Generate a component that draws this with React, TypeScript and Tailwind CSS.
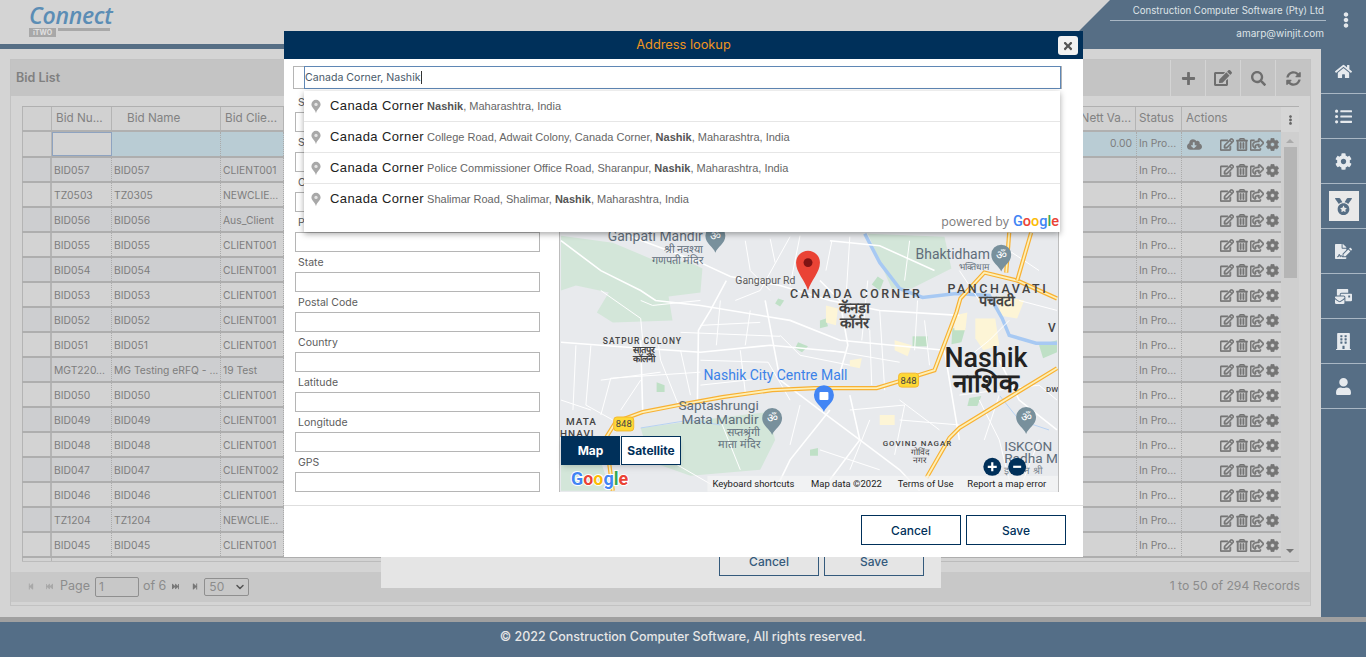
import React from 'react';
import {
  FaBuilding,
  FaCloudDownloadAlt,
  FaCog,
  FaEdit,
  FaEllipsisV,
  FaFileSignature,
  FaFastBackward,
  FaFastForward,
  FaHome,
  FaListUl,
  FaMailBulk,
  FaMedal,
  FaPlus,
  FaRegEdit,
  FaRegShareSquare,
  FaRegTrashAlt,
  FaSearch,
  FaStepBackward,
  FaStepForward,
  FaSyncAlt,
  FaTimes,
  FaUser,
} from 'react-icons/fa';
import { ChevronDown } from 'lucide-react';

const rows = [
  ['BID057', 'BID057', 'CLIENT001'],
  ['TZ0503', 'TZ0305', 'NEWCLIE...'],
  ['BID056', 'BID056', 'Aus_Client'],
  ['BID055', 'BID055', 'CLIENT001'],
  ['BID054', 'BID054', 'CLIENT001'],
  ['BID053', 'BID053', 'CLIENT001'],
  ['BID052', 'BID052', 'CLIENT001'],
  ['BID051', 'BID051', 'CLIENT001'],
  ['MGT220...', 'MG Testing eRFQ - ...', '19 Test'],
  ['BID050', 'BID050', 'CLIENT001'],
  ['BID049', 'BID049', 'CLIENT001'],
  ['BID048', 'BID048', 'CLIENT001'],
  ['BID047', 'BID047', 'CLIENT002'],
  ['BID046', 'BID046', 'CLIENT001'],
  ['TZ1204', 'TZ1204', 'NEWCLIE...'],
  ['BID045', 'BID045', 'CLIENT001'],
];

const sideItems = [FaHome, FaListUl, FaCog, FaMedal, FaFileSignature, FaMailBulk, FaBuilding, FaUser];

const fields = ['Street No', 'Street', 'City', 'Province', 'State', 'Postal Code', 'Country', 'Latitude', 'Longitude', 'GPS'];

const suggestions = [
  { rest: [['Nashik', true], [', Maharashtra, India', false]] },
  { rest: [['College Road, Adwait Colony, Canada Corner, ', false], ['Nashik', true], [', Maharashtra, India', false]] },
  { rest: [['Police Commissioner Office Road, Sharanpur, ', false], ['Nashik', true], [', Maharashtra, India', false]] },
  { rest: [['Shalimar Road, Shalimar, ', false], ['Nashik', true], [', Maharashtra, India', false]] },
] as { rest: [string, boolean][] }[];

// map geometry is in page coordinates, the viewBox starts at the map's corner
const greens = [
  '560,235 612,242 650,258 690,262 702,268 700,292 668,296 672,320 612,322 596,312 608,292 575,285 560,290',
  '640,428 700,420 768,412 775,440 760,470 690,476 650,462',
  '868,233 945,236 952,268 912,288 892,288',
  '560,450 600,462 610,491 560,491',
];
const greenSmall = [
  '656,382 664,385 664,392 656,392',
  '798,342 808,346 802,352 795,348',
  '778,298 784,300 780,306 775,303',
  '913,336 928,336 928,346 913,346',
  '953,328 966,328 962,342 952,344',
  '970,398 982,396 978,406 968,406',
  '820,320 826,318 828,326 820,328',
  '878,276 884,280 880,290 872,284',
  '1040,345 1058,340 1058,352 1044,358',
  '810,450 818,448 818,456 810,456',
];
const yellows = [
  '976,318 996,318 1000,345 984,350 976,338',
  '955,315 968,312 966,330 955,330',
  '895,340 912,345 908,356 895,350',
  '850,360 862,358 860,368 850,366',
  '1000,295 1025,300 1018,318 1000,315',
  '826,305 838,308 836,325 826,322',
  '880,415 895,415 895,425 880,425',
];
const roads = [
  '560,240 600,270 640,290 655,300 700,305 790,320 840,340 945,350',
  '620,232 700,262 730,276 780,285 830,300 880,310 960,315',
  '560,342 640,348 700,352 770,345 845,352',
  '726,280 710,310 698,330 697,400',
  '640,340 642,410',
  '765,300 780,380 800,395 820,410 860,440',
  '820,280 840,300 848,345 838,380',
  '945,350 960,440',
  '860,440 900,470 920,491',
  '775,491 790,460 830,410',
  '1000,360 1020,400 1058,430',
  '830,240 880,245 935,270',
  '850,395 860,440 830,480',
];
const thinRoads = [
  '678,405 660,360 658,345',
  '590,345 585,405 612,420',
  '700,360 768,362 790,400',
  '900,420 960,425',
  '1010,320 990,340 975,352',
  '1040,440 1020,491',
  '868,280 862,340',
  '918,300 915,350',
  '880,310 885,390',
  '800,235 790,285',
  '745,240 750,270 770,290',
  '640,300 652,305 700,300',
  '600,415 610,378 700,372',
  '668,460 720,490',
  '680,332 780,336',
  '700,325 760,322',
  '830,350 900,362',
  '870,420 850,470',
  '900,400 940,430',
  '980,400 1000,440 1010,480',
  '1020,300 1058,310',
  '720,420 740,470',
  '600,380 660,372',
  '575,345 572,410',
  '640,380 620,410',
  '910,240 905,280',
  '960,270 980,300',
  '790,236 760,290 735,300',
  '770,238 775,262',
  '832,240 826,270',
  '850,236 846,300',
  '680,350 690,395',
  '740,350 745,392',
  '700,385 765,378',
  '720,300 716,345',
  '750,310 745,345',
  '780,335 800,355 850,365',
  '855,310 870,330 872,385',
  '800,405 790,445',
  '850,410 905,405',
  '905,405 895,455',
  '820,450 880,470',
  '960,395 1040,385',
  '1000,395 985,440',
  '1040,385 1058,400',
  '925,320 930,365',
  '560,400 590,410',
  '1010,250 1040,270',
  '600,290 640,318 642,340',
];
const highways = [
  '612,491 605,438 615,422 642,412 678,405 722,397 772,390 815,388 877,388 903,380 935,370 957,312 961,298 985,272 1018,280 1058,298',
  '1010,232 1007,272',
  '1032,232 1018,280',
  '927,478 950,438 960,428 1058,368',
];
const river = '865,233 880,262 900,288 923,297 957,293 990,295 1003,318 1010,335 1037,343 1058,343';

const mapText = 'font-["Roboto",sans-serif]';

const MapPin: React.FC<{ x: number; y: number; color?: string; bag?: boolean }> = ({ x, y, color = '#78909c', bag }) => (
  <g transform={`translate(${x} ${y})`}>
    <path d="M0 0 C-2-6-10-9-10-17 A10 10 0 1 1 10-17 C10-9 2-6 0 0Z" fill={color} />
    {bag ? (
      <rect x="-4.5" y="-20" width="9" height="8" rx="1" fill="#fff" />
    ) : (
      <text x="0" y="-12.5" textAnchor="middle" fontSize="12" fill="#fff">ॐ</text>
    )}
  </g>
);

const MapShield: React.FC<{ x: number; y: number }> = ({ x, y }) => (
  <g>
    <rect x={x - 10} y={y - 7} width="20" height="14" rx="3" fill="#fdd835" stroke="#f5b72e" />
    <text x={x} y={y + 3.5} textAnchor="middle" fontSize="9.5" fill="#444">848</text>
  </g>
);

const NashikMap: React.FC = () => (
  <svg viewBox="559 92 500 400" className={`block w-[498px] h-[399px] bg-[#e8eaed] ${mapText}`}>
    {greens.map((p, i) => <polygon key={i} points={p} fill="#d3e6d9" />)}
    {greenSmall.map((p, i) => <polygon key={i} points={p} fill="#bfe0c6" />)}
    {yellows.map((p, i) => <polygon key={i} points={p} fill="#fdf5d6" />)}
    <polyline points={river} fill="none" stroke="#a7c9f3" strokeWidth="3.5" />
    <polyline points="1000,395 1020,420 1050,430" fill="none" stroke="#b7d2f3" strokeWidth="1" />
    <polyline points="640,428 690,420 720,425" fill="none" stroke="#b7d2f3" strokeWidth="1" />
    {thinRoads.map((p, i) => <polyline key={i} points={p} fill="none" stroke="#fff" strokeWidth="1" />)}
    {roads.map((p, i) => <polyline key={i} points={p} fill="none" stroke="#fff" strokeWidth="1.6" />)}
    {highways.map((p, i) => (
      <g key={i}>
        <polyline points={p} fill="none" stroke="#f8b133" strokeWidth="4.2" />
        <polyline points={p} fill="none" stroke="#fdf0b8" strokeWidth="1.8" />
      </g>
    ))}

    <MapShield x={623} y={424} />
    <MapShield x={909} y={380} />

    <g fill="#5f6d7a" fontSize="13.7">
      <text x="607" y="240" fontSize="14">Ganpati Mandir</text>
      <text x="703" y="252" textAnchor="end" fontSize="11">श्री नवश्या</text>
      <text x="703" y="263" textAnchor="end" fontSize="11">गणपती मंदिर</text>
      <text x="916" y="258" fontSize="14">Bhaktidham</text>
      <text x="990" y="269" textAnchor="end" fontSize="9">भक्तिधाम</text>
      <text x="678" y="410">Saptashrungi</text>
      <text x="681" y="424">Mata Mandir</text>
      <text x="760" y="436" textAnchor="end" fontSize="11">सप्तश्रृंगी</text>
      <text x="760" y="448" textAnchor="end" fontSize="11">माता मंदिर</text>
      <text x="1005" y="451">ISKCON</text>
      <text x="1005" y="463">Radha M</text>
      <text x="1005" y="474" fontSize="10" opacity="0.8">इस्कॉन श्री</text>
    </g>
    <text x="735" y="283" fontSize="10.5" fill="#5a5a5a">Gangapur Rd</text>
    <g fill="#444" fontWeight="500">
      <text x="790" y="298" fontSize="12.5" letterSpacing="2.4">CANADA CORNER</text>
      <text x="855" y="313" fontSize="15" fontWeight="700" textAnchor="middle">कॅनडा</text>
      <text x="855" y="328" fontSize="15" fontWeight="700" textAnchor="middle">कॉर्नर</text>
      <text x="948" y="293" fontSize="12.5" letterSpacing="2.6">PANCHAVATI</text>
      <text x="998" y="306" fontSize="14.5" fontWeight="700" textAnchor="middle">पंचवटी</text>
      <text x="1049" y="332" fontSize="12">V</text>
      <text x="602" y="344" fontSize="8.5" letterSpacing="1">SATPUR COLONY</text>
      <text x="643" y="353" fontSize="9.5" fontWeight="700" textAnchor="middle">सातपुर</text>
      <text x="643" y="362" fontSize="9.5" fontWeight="700" textAnchor="middle">कॉलनी</text>
      <text x="565" y="425" fontSize="10" letterSpacing="1">MATA</text>
      <text x="559" y="437" fontSize="10" letterSpacing="1">HNAVI</text>
      <text x="883" y="446" fontSize="8" letterSpacing="1">GOVIND NAGAR</text>
      <text x="920" y="455" fontSize="8.5" textAnchor="middle">गोविंद</text>
      <text x="920" y="463" fontSize="8.5" textAnchor="middle">नगर</text>
      <text x="1047" y="392" fontSize="8">DW</text>
    </g>
    <text x="703" y="380" fontSize="14" fill="#3b82e8">Nashik City Centre Mall</text>
    <text x="945" y="367" fontSize="27" fontWeight="500" fill="#222">Nashik</text>
    <text x="987" y="392" fontSize="26" fontWeight="700" fill="#222" textAnchor="middle">नाशिक</text>

    <MapPin x={715} y={252} />
    <MapPin x={772} y={435} />
    <MapPin x={1002} y={271} />
    <MapPin x={1027} y={434} />
    <MapPin x={824} y={412} color="#4285f4" bag />

    <path d="M808 290 C805 280 796 272 796 262 A12 12 0 1 1 820 262 C820 272 811 280 808 290Z" fill="#ea4335" />
    <circle cx="808" cy="262" r="4.5" fill="#7f1313" />

    <rect x="707" y="476" width="352" height="16" fill="#f5f5f5" opacity="0.7" />
    <g fontSize="9.5" fill="#222">
      <text x="712" y="487">Keyboard shortcuts</text>
      <text x="811" y="487">Map data ©2022</text>
      <text x="898" y="487">Terms of Use</text>
      <text x="968" y="487">Report a map error</text>
    </g>
    <text x="570" y="485" fontSize="18" fontWeight="700" stroke="#fff" strokeWidth="2" style={{ paintOrder: 'stroke' }}>
      <tspan fill="#4285f4">G</tspan><tspan fill="#ea4335">o</tspan><tspan fill="#fbbc05">o</tspan><tspan fill="#4285f4">g</tspan><tspan fill="#34a853">l</tspan><tspan fill="#ea4335">e</tspan>
    </text>

    <circle cx="993" cy="467" r="9" fill="#00305a" />
    <path d="M988.5 467h9M993 462.5v9" stroke="#fff" strokeWidth="2.2" />
    <circle cx="1018" cy="467" r="9" fill="#00305a" />
    <path d="M1014 467h8" stroke="#fff" strokeWidth="2.2" />
  </svg>
);

const GrayPin: React.FC = () => (
  <svg viewBox="0 0 12 16" className="w-[10px] h-[15px] shrink-0">
    <path d="M6 16 C5 11 0.5 9 0.5 5.5 A5.5 5.5 0 1 1 11.5 5.5 C11.5 9 7 11 6 16Z" fill="#a8a8a8" />
    <circle cx="6" cy="5.5" r="2" fill="#e4e4e4" />
  </svg>
);

const AddressModal: React.FC = () => (
  <div className="absolute left-[284px] top-[31px] w-[799px] h-[526px] bg-white flex flex-col font-['Inter',sans-serif]">
    <div className="h-[28px] shrink-0 bg-[#00305a] flex items-center justify-center relative">
      <span className="text-[12.8px] text-[#f0951e]">Address lookup</span>
      <button className="absolute right-[5px] top-[5px] w-[20px] h-[19px] bg-[#f2f2f2] rounded-[3px] flex items-center justify-center text-[#555]">
        <FaTimes className="w-[12px] h-[12px]" />
      </button>
    </div>

    <div className="h-[33px] shrink-0 pl-[9px] pr-[21px] pt-[7px]">
      <div className="h-[23px] border border-[#b5b5b5] pl-[10px] flex">
        <div className="flex-1 -mt-[1px] h-[23px] border border-[#5f87b5] flex items-center text-[10.6px] text-[#4a5a6a]">
          Canada Corner, Nashik<span className="w-px h-[13px] bg-[#333]" />
        </div>
      </div>
    </div>

    <div className="flex pl-[11px] gap-[19px]">
      <div className="w-[245px]">
        {fields.map((f) => (
          <div key={f} className="h-[40px]">
            <div className="h-[20px] pl-[3px] pt-[1px] flex items-center text-[10.5px] text-[#5c5c5c]">{f}</div>
            <div className="h-[20px] border border-[#b5b5b5] bg-white" />
          </div>
        ))}
      </div>
      <div className="relative w-[500px] h-[400px] border border-[#bdbdbd]">
        <NashikMap />
        <div className="absolute left-[1px] top-[343px] flex gap-px shadow-md text-[12px] font-bold">
          <div className="w-[59px] h-[29px] bg-[#00305a] text-white flex items-center justify-center">Map</div>
          <div className="w-[60px] h-[29px] bg-white border border-[#00305a] text-[#00305a] flex items-center justify-center">Satellite</div>
        </div>
      </div>
    </div>

    <div className="mt-[13px] border-t border-[#dedede] pt-[9px] pr-[17px] flex justify-end gap-[5px]">
      <button className="w-[100px] h-[30px] pt-[2px] border border-[#00305a] text-[12px] font-medium text-[#00305a]">Cancel</button>
      <button className="w-[100px] h-[30px] pt-[2px] border border-[#00305a] text-[12px] font-medium text-[#00305a]">Save</button>
    </div>

    {/* places autocomplete, sits over the form and the map */}
    <div className="absolute left-[20px] top-[60px] w-[756px] h-[141px] bg-white shadow-[0_2px_6px_rgba(0,0,0,0.35)] font-['Liberation_Sans',sans-serif]">
      {suggestions.map((s, i) => (
        <div key={i} className={`h-[31px] flex items-center pl-[7px] whitespace-nowrap border-b ${i < 3 ? 'border-[#e6e6e6]' : 'border-transparent'}`}>
          <GrayPin />
          <span className="ml-[9px] text-[13px] tracking-[0.4px] text-[#222]">Canada Corner</span>
          <span className="ml-[3px] text-[11px] text-[#666]">
            {s.rest.map(([t, bold], j) => (
              <span key={j} className={bold ? 'font-bold text-[#555]' : ''}>{t}</span>
            ))}
          </span>
        </div>
      ))}
      <div className="absolute right-[1px] -bottom-[1px] flex items-baseline text-[12.3px] text-[#7b7b7b] font-['Open_Sans',sans-serif]">
        <span>powered by</span>
        <span className="ml-[4px] text-[14.5px] font-['Roboto',sans-serif] font-medium">
          <span className="text-[#4285f4]">G</span>
          <span className="text-[#ea4335]">o</span>
          <span className="text-[#fbbc05]">o</span>
          <span className="text-[#4285f4]">g</span>
          <span className="text-[#34a853]">l</span>
          <span className="text-[#ea4335]">e</span>
        </span>
      </div>
    </div>
  </div>
);

const RowActions: React.FC = () => (
  <div className="ml-auto mr-[2px] flex items-center gap-[2px] text-[#757575] [&_svg]:[stroke-width:24]">
    <FaRegEdit className="w-[14px] h-[13px]" />
    <FaRegTrashAlt className="w-[12px] h-[13px]" />
    <FaRegShareSquare className="w-[14px] h-[13px]" />
    <FaCog className="w-[13px] h-[13px]" />
  </div>
);

const BidRow: React.FC<{ row: string[]; dark: boolean }> = ({ row, dark }) => (
  <div className={`flex h-[25px] shrink-0 border-b-2 border-[#aeaeae] text-[10.3px] text-[#7d7d7d] ${dark ? 'bg-[#cdced0]' : 'bg-[#d3d3d3]'}`}>
    <div className="w-[30px] border-l border-r-2 border-[#b4b4b4]" />
    <div className="w-[60px] pl-[2px] pt-[3px] flex items-center border-r border-dotted border-[#aaa] whitespace-nowrap">{row[0]}</div>
    <div className="w-[109px] pl-[2px] pt-[3px] flex items-center border-r border-dotted border-[#aaa] whitespace-nowrap overflow-hidden">{row[1]}</div>
    <div className="w-[63px] pl-[2px] pt-[3px] flex items-center border-r border-dotted border-[#aaa] whitespace-nowrap">{row[2]}</div>
    <div className="flex-1" />
    <div className="w-[46px] pl-[2px] pt-[3px] flex items-center border-l border-r border-dotted border-[#aaa]">In Pro...</div>
    <div className="w-[99px] pt-[1px] flex items-center"><RowActions /></div>
  </div>
);

const GridHead: React.FC = () => (
  <div className="flex h-[26px] shrink-0 border-y border-[#b0b0b0] border-b-2 text-[11.7px] text-[#828282] bg-[#d1d1d1]">
    <div className="w-[30px] border-x border-[#b4b4b4]" />
    <div className="w-[60px] pl-[4px] flex items-center border-r border-[#b4b4b4] whitespace-nowrap overflow-hidden">Bid Nu...</div>
    <div className="w-[109px] pl-[15px] flex items-center border-r border-[#b4b4b4]">Bid Name</div>
    <div className="w-[63px] pl-[4px] flex items-center border-r border-[#b4b4b4] whitespace-nowrap overflow-hidden">Bid Clie...</div>
    <div className="flex-1 flex items-center justify-end pr-[4px] border-r border-[#b4b4b4] whitespace-nowrap">Nett Va...</div>
    <div className="w-[46px] pl-[3px] flex items-center border-r border-[#b4b4b4]">Status</div>
    <div className="w-[99px] pl-[4px] flex items-center">Actions</div>
  </div>
);

const FilterRow: React.FC = () => (
  <div className="flex h-[26px] shrink-0 border-b-2 border-[#aeaeae] bg-[#b9ccd4] text-[10.3px] text-[#7d7d7d]">
    <div className="w-[30px] bg-[#d1d1d1] border-x border-[#b4b4b4]" />
    <div className="w-[60px] bg-[#d3d3d3] border border-[#8ea3c0]" />
    <div className="w-[109px] border-r border-dotted border-[#aaa]" />
    <div className="w-[63px] border-r border-dotted border-[#aaa]" />
    <div className="flex-1 flex items-center justify-end pr-[4px]">0.00</div>
    <div className="w-[46px] pl-[2px] flex items-center border-l border-r border-dotted border-[#aaa]">In Pro...</div>
    <div className="w-[99px] flex items-center pl-[5px]">
      <FaCloudDownloadAlt className="w-[15px] h-[13px] text-[#7a7a7a]" />
      <RowActions />
    </div>
  </div>
);

const BidGrid: React.FC = () => (
  <div className="flex h-[456px] border-b border-[#bcbcbc]">
    <div className="flex-1 flex flex-col overflow-hidden">
      <GridHead />
      <FilterRow />
      {rows.map((r, i) => <BidRow key={i} row={r} dark={i % 2 === 0} />)}
      <div className="h-[4px] bg-[#d3d3d3] flex"><div className="w-[30px] border-x border-[#b4b4b4]" /></div>
    </div>
    <div className="w-[18px] flex flex-col items-center bg-[#cfcfcf]">
      <div className="h-[26px] w-full bg-[#d6d6d6] flex items-center justify-center text-[#666] border-t border-[#b0b0b0]">
        <FaEllipsisV className="w-[9px] h-[10px]" />
      </div>
      <div className="mt-[7px] w-0 h-0 border-x-[4px] border-x-transparent border-b-[4px] border-b-[#aaa]" />
      <div className="mt-[4px] w-[13px] h-[131px] bg-[#b5b5b5]" />
      <div className="mt-auto mb-[8px] w-0 h-0 border-x-[4px] border-x-transparent border-t-[4px] border-t-[#777]" />
    </div>
  </div>
);

const Pager: React.FC = () => (
  <div className="mt-[10px] h-[30px] bg-[#c8c8c8] flex items-center pl-[16px] pr-[10px] pb-[1px] text-[12.5px] text-[#8c8c8c]">
    <FaStepBackward className="w-[8px] h-[7px] text-[#a8a8a8]" />
    <FaFastBackward className="ml-[9px] w-[11px] h-[7px] text-[#a8a8a8]" />
    <span className="ml-[5px]">Page</span>
    <div className="ml-[5px] w-[44px] h-[20px] border border-[#8f8f8f] rounded-[2px] pl-[3px] flex items-center text-[12px]">1</div>
    <span className="ml-[4px]">of 6</span>
    <FaFastForward className="ml-[4px] w-[11px] h-[7px] text-[#777]" />
    <FaStepForward className="ml-[10px] w-[8px] h-[7px] text-[#777]" />
    <div className="ml-[5px] w-[45px] h-[18px] border border-[#8f8f8f] rounded-[2px] pl-[4px] flex items-center justify-between pr-[2px] text-[12px]">
      50 <ChevronDown className="w-[12px] h-[12px] text-[#555]" strokeWidth={3} />
    </div>
    <span className="ml-auto text-[12.2px]">1 to 50 of 294 Records</span>
  </div>
);

const App: React.FC = () => {
  return (
    <div className="relative w-[1366px] h-[657px] overflow-hidden bg-[#d4d4d4] flex flex-col font-['Inter',sans-serif]">
      {/* top bar */}
      <header className="h-[44px] shrink-0 flex justify-between relative">
        <div className="pl-[29px] pt-[3px]">
          <div className="text-[23px] leading-[25px] italic font-semibold text-[#5b8db5] font-['Open_Sans',sans-serif] tracking-[-0.3px]">Connect</div>
          <div className="flex items-start">
            <span className="w-[27px] h-[9px] bg-[#a8a8a8] text-[7px] leading-[9px] text-center text-[#e0e0e0] font-bold">iTWO</span>
            <span className="ml-[2px] w-[52px] h-[3px] bg-[#a8a8a8]" />
          </div>
        </div>
        <div className="w-[300px] bg-[#566e85] [clip-path:polygon(44px_0,100%_0,100%_100%,0_100%)] flex justify-end">
          <div className="mt-[4px] w-[216px] text-right text-[9.65px] text-[#dfe4e8]">
            <div className="h-[17px] pr-[2px] border-b border-[#a9b7c4] leading-[13px]">Construction Computer Software (Pty) Ltd</div>
            <div className="pr-[2px] mt-[5px] text-[10px]">amarp@winjit.com</div>
          </div>
          <div className="w-[40px] flex justify-center pt-[12px] text-[#e4e8ec]">
            <FaEllipsisV className="w-[14px] h-[16px]" />
          </div>
        </div>
      </header>
      <div className="h-[5px] shrink-0 bg-[#566e85]" />

      <main className="flex-1 flex min-h-0">
        <div className="flex-1 p-[10px] pb-[11px] min-w-0">
          <section className="h-full border border-[#c2c2c2] flex flex-col">
            <div className="h-[36px] shrink-0 bg-[#c4c4c4] flex items-center">
              <h1 className="pl-[5px] text-[12.5px] font-semibold text-[#808080]">Bid List</h1>
              <div className="ml-auto flex h-full text-[#6e6e6e]">
                <div className="w-[35px] flex items-center justify-center border-l border-[#d4d4d4]"><FaPlus className="w-[15px] h-[15px]" /></div>
                <div className="w-[35px] flex items-center justify-center border-l border-[#d4d4d4]"><FaEdit className="w-[18px] h-[16px]" /></div>
                <div className="w-[35px] flex items-center justify-center border-l border-[#d4d4d4]"><FaSearch className="w-[15px] h-[15px]" /></div>
                <div className="w-[35px] flex items-center justify-center border-l border-[#d4d4d4]"><FaSyncAlt className="w-[15px] h-[15px]" /></div>
              </div>
            </div>
            <div className="px-[11px] pt-[10px]"><BidGrid /></div>
            <Pager />
          </section>
        </div>
        <nav className="w-[45px] shrink-0 bg-[#566e85] flex flex-col text-[#e6eaee]">
          {sideItems.map((Icon, i) => (
            <div key={i} className="h-[45px] shrink-0 border-b border-[#a9b7c4] flex items-center justify-center">
              {i === 3 ? (
                <div className="w-[30px] h-[30px] bg-[#e9e9e9] text-[#566e85] flex items-center justify-center"><Icon className="w-[17px] h-[17px]" /></div>
              ) : (
                <Icon className="w-[17px] h-[17px]" />
              )}
            </div>
          ))}
        </nav>
      </main>

      <div className="h-[5px] shrink-0 bg-[#a0a0a0]" />
      <footer className="h-[35px] shrink-0 pb-[4px] bg-[#546e87] flex items-center justify-center text-[12.5px] font-medium text-[#e6e6e6]">
        © 2022 Construction Computer Software, All rights reserved.
      </footer>

      {/* parent dialog peeking out under the lookup */}
      <div className="absolute left-[381px] top-[540px] w-[560px] h-[48px] bg-[#e5e5e5] flex justify-end items-end gap-[5px] pr-[17px] pb-[12px]">
        <button className="w-[100px] h-[30px] pt-[2px] border border-[#345a7c] text-[12px] font-medium text-[#345a7c]">Cancel</button>
        <button className="w-[100px] h-[30px] pt-[2px] border border-[#345a7c] text-[12px] font-medium text-[#345a7c]">Save</button>
      </div>

      <AddressModal />
    </div>
  );
};

export default App;
